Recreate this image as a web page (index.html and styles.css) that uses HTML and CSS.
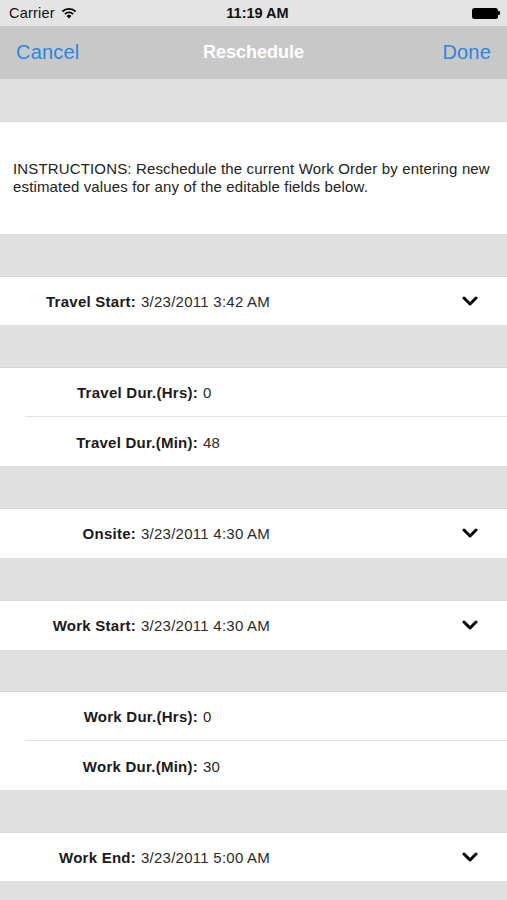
FILE: index.html
```html
<!DOCTYPE html>
<html>
<head>
<meta charset="utf-8">
<link rel="stylesheet" href="styles.css">
</head>
<body>
<div class="status">
  <div class="carrier">Carrier
    <svg class="wifi" width="16" height="12" viewBox="0 0 16 12"><path d="M8 11.5 L5.6 8.9 A3.4 3.4 0 0 1 10.4 8.9 Z" fill="#000"/><path d="M3.9 7.1 A5.9 5.9 0 0 1 12.1 7.1" stroke="#000" stroke-width="1.8" fill="none"/><path d="M1.4 4.5 A9.4 9.4 0 0 1 14.6 4.5" stroke="#000" stroke-width="1.8" fill="none"/></svg>
  </div>
  <div class="time">11:19 AM</div>
  <div class="battery"><span class="batt-body"></span><span class="batt-tip"></span></div>
</div>
<div class="nav">
  <span class="nav-btn">Cancel</span>
  <span class="nav-title">Reschedule</span>
  <span class="nav-btn">Done</span>
</div>
<div class="gap"></div>
<div class="instructions">INSTRUCTIONS: Reschedule the current Work Order by entering new estimated values for any of the editable fields below.</div>
<div class="gap"></div>
<div class="row"><span class="label">Travel Start:</span><span class="value">3/23/2011 3:42 AM</span><svg class="chev" viewBox="0 0 16 10" width="16" height="10"><path d="M2 2 L8 8 L14 2" stroke="#000" stroke-width="3" fill="none" stroke-linecap="round" stroke-linejoin="round"/></svg></div>
<div class="gap"></div>
<div class="group">
  <div class="row sub"><span class="label wide">Travel Dur.(Hrs):</span><span class="value">0</span></div>
  <div class="row sub"><span class="label wide">Travel Dur.(Min):</span><span class="value">48</span></div>
</div>
<div class="gap"></div>
<div class="row tall"><span class="label">Onsite:</span><span class="value">3/23/2011 4:30 AM</span><svg class="chev" viewBox="0 0 16 10" width="16" height="10"><path d="M2 2 L8 8 L14 2" stroke="#000" stroke-width="3" fill="none" stroke-linecap="round" stroke-linejoin="round"/></svg></div>
<div class="gap"></div>
<div class="row tall"><span class="label">Work Start:</span><span class="value">3/23/2011 4:30 AM</span><svg class="chev" viewBox="0 0 16 10" width="16" height="10"><path d="M2 2 L8 8 L14 2" stroke="#000" stroke-width="3" fill="none" stroke-linecap="round" stroke-linejoin="round"/></svg></div>
<div class="gap short"></div>
<div class="group">
  <div class="row sub"><span class="label wide">Work Dur.(Hrs):</span><span class="value">0</span></div>
  <div class="row sub"><span class="label wide">Work Dur.(Min):</span><span class="value">30</span></div>
</div>
<div class="gap"></div>
<div class="row"><span class="label">Work End:</span><span class="value">3/23/2011 5:00 AM</span><svg class="chev" viewBox="0 0 16 10" width="16" height="10"><path d="M2 2 L8 8 L14 2" stroke="#000" stroke-width="3" fill="none" stroke-linecap="round" stroke-linejoin="round"/></svg></div>
<div class="gap"></div>
</body>
</html>
```
FILE: styles.css
```css
* { box-sizing: border-box; }
html, body { margin: 0; padding: 0; }
body {
  width: 507px;
  height: 900px;
  overflow: hidden;
  background: #e0e0e0;
  font-family: "Liberation Sans", Arial, sans-serif;
  color: #1c1c1c;
}
.status {
  height: 26px;
  background: #e4e4e4;
  display: flex;
  align-items: center;
  justify-content: space-between;
  padding: 0 7px 0 9px;
  position: relative;
  font-size: 14.5px;
  color: #111;
}
.carrier { display: flex; align-items: center; gap: 6px; letter-spacing: 0.2px; }
.wifi { margin-top: -1px; }
.time {
  position: absolute;
  left: 8px; right: 0;
  text-align: center;
  font-weight: bold;
  font-size: 14.5px;
  pointer-events: none;
}
.battery { display: flex; align-items: center; }
.batt-body {
  width: 26px; height: 11px;
  background: #000;
  border-radius: 2.5px;
  display: block;
}
.batt-tip {
  width: 2px; height: 4px;
  background: #000;
  border-radius: 0 1px 1px 0;
  display: block;
}
.nav {
  height: 53px;
  background: #c8c8c8;
  display: flex;
  align-items: center;
  justify-content: space-between;
  padding: 0 16px 0 16px;
  position: relative;
}
.nav-btn { color: #2b86e3; font-size: 20px; letter-spacing: 0.2px; }
.nav-title {
  position: absolute;
  left: 0; right: 0;
  text-align: center;
  color: #fff;
  font-weight: bold;
  font-size: 18px;
}
.gap {
  height: 43px;
  background: #e0e0e0;
  border-bottom: 1px solid #d8d8d8;
}
.gap.short { height: 42px; }
.instructions {
  height: 112px;
  background: #fff;
  display: flex;
  align-items: center;
  padding: 0 13px;
  font-size: 15px;
  letter-spacing: 0.15px;
  line-height: 18px;
  color: #222;
}
.row {
  height: 48px;
  background: #fff;
  display: flex;
  align-items: center;
  font-size: 15px;
  letter-spacing: 0.25px;
  position: relative;
}
.row.tall { height: 49px; }
.group { background: #fff; }
.row.sub + .row.sub { border-top: 1px solid #e2e2e2; margin-left: 25px; height: 50px; padding-top: 1px; }
.label {
  width: 136px;
  text-align: right;
  font-weight: bold;
  color: #1a1a1a;
  flex: none;
}
.label.wide { width: 198px; }
.row.sub + .row.sub .label.wide { width: 173px; }
.value { margin-left: 5px; color: #2a2a2a; }
.chev { position: absolute; right: 29px; top: 19px; }
```
